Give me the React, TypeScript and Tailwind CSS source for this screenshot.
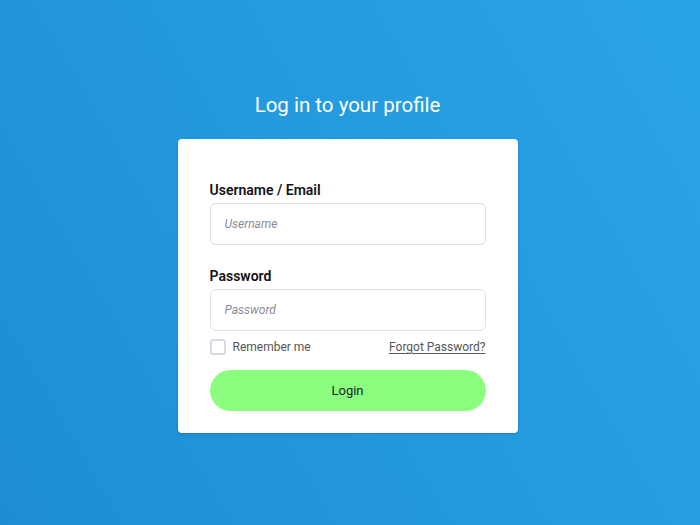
import React from "react";

export default function App() {
  return (
    <div
      className="w-full h-[525px] pr-[5px] flex flex-col items-center bg-[linear-gradient(60deg,#1e8dd4_0%,#2499de_50%,#2aa4e8_100%)]"
      style={{ fontFamily: "Roboto, 'Noto Sans', sans-serif" }}
    >
      <h1 className="mt-[91px] text-[20.5px] leading-[28px] text-white font-normal">
        Log in to your profile
      </h1>
      <div className="mt-[20px] w-[340px] bg-white rounded-[4px] shadow-[0_1px_3px_rgba(0,0,0,0.15)] px-8 pt-[41px] pb-[22px]">
        <label className="block text-[14px] leading-5 font-semibold text-[#111]">
          Username / Email
        </label>
        <input
          placeholder="Username"
          className="mt-[3px] block w-full h-[42px] rounded-[6px] border border-[#dde1ea] px-[14px] text-[12px] italic outline-none placeholder:text-[#8a8a9a]"
        />
        <label className="mt-[21px] block text-[14px] leading-5 font-semibold text-[#111]">
          Password
        </label>
        <input
          type="password"
          placeholder="Password"
          className="mt-[3px] block w-full h-[42px] rounded-[6px] border border-[#dde1ea] px-[14px] text-[12px] italic outline-none placeholder:text-[#8a8a9a]"
        />
        <div className="mt-[6px] h-5 flex items-center justify-between">
          <div className="flex items-center">
            <span className="w-4 h-4 rounded-[3px] border-2 border-[#d6dbe4] bg-white" />
            <span className="ml-[7px] text-[12px] text-[#555]">Remember me</span>
          </div>
          <a className="text-[12px] text-[#555] underline underline-offset-2">
            Forgot Password?
          </a>
        </div>
        <button className="mt-[13px] w-full h-[41px] rounded-full bg-[#8bfd7f] text-[13px] font-normal text-[#1b1b2a]">
          Login
        </button>
      </div>
    </div>
  );
}
